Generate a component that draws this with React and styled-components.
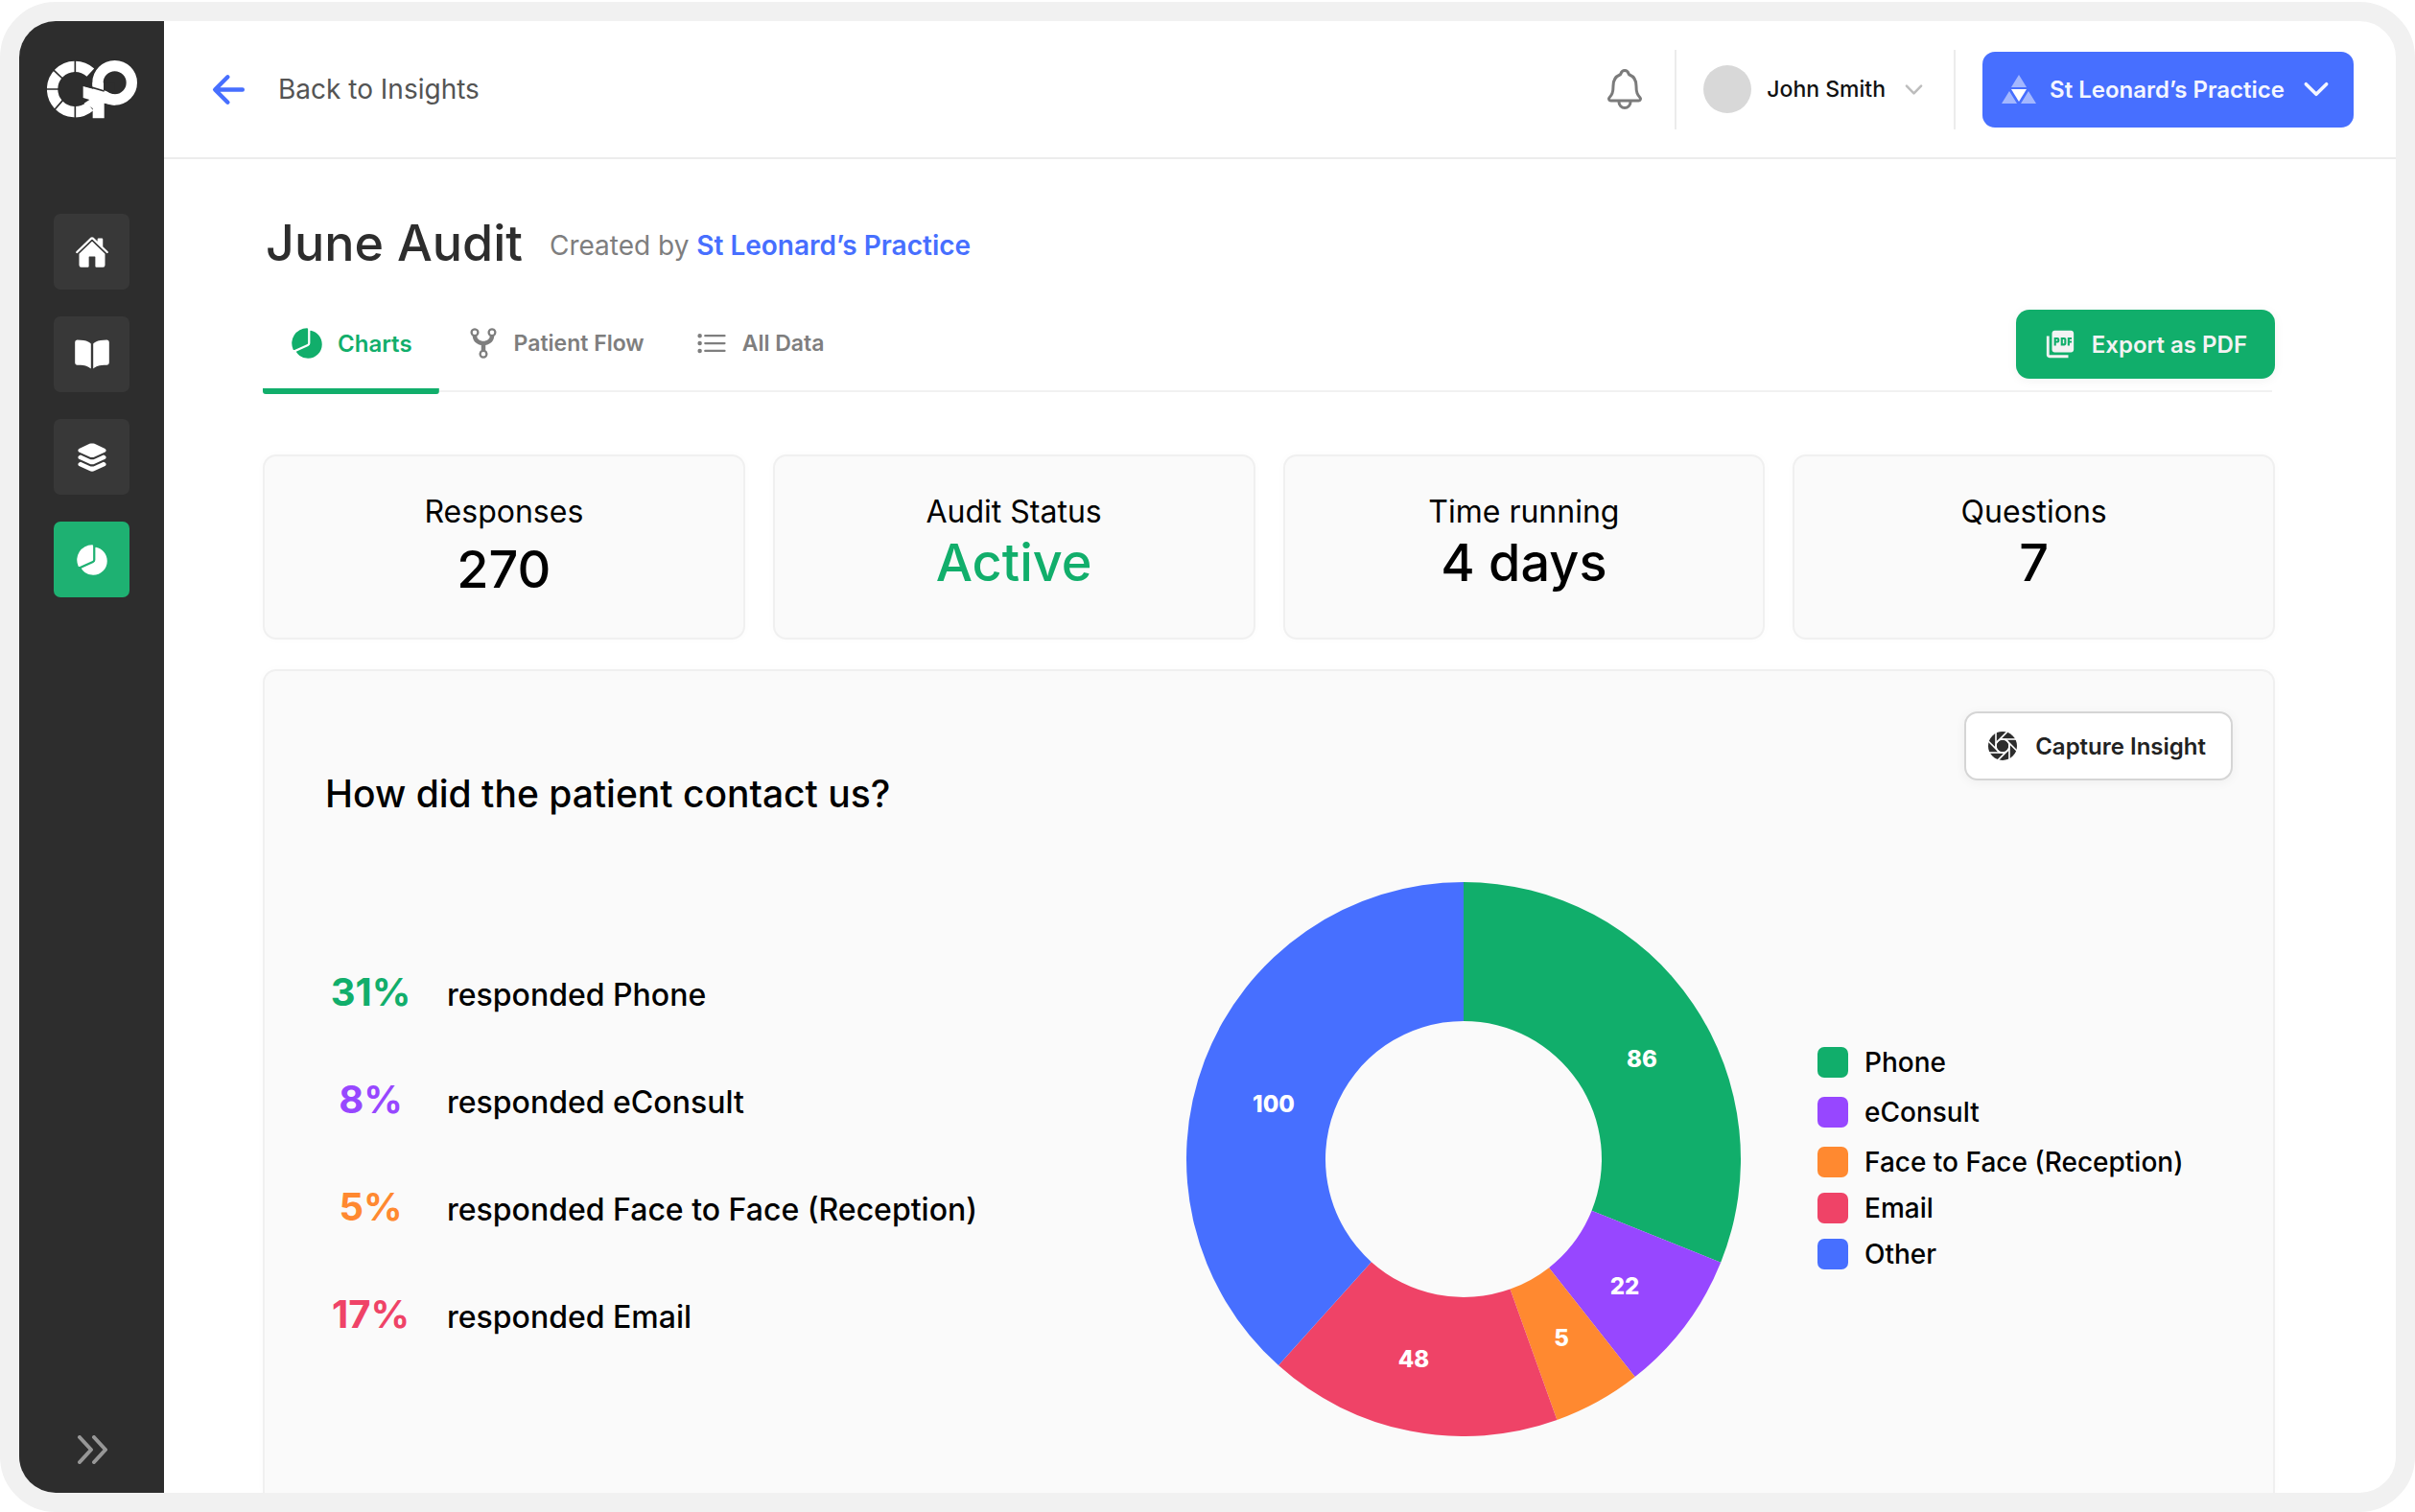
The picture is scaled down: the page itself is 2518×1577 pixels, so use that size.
import React from 'react';
import styled, { createGlobalStyle } from 'styled-components';
import {
  IoArrowBack,
  IoBook,
  IoChevronDown,
  IoGitNetwork,
  IoHome,
  IoLayers,
  IoListOutline,
  IoNotificationsOutline,
  IoPieChart,
} from 'react-icons/io5';
import { MdPictureAsPdf } from 'react-icons/md';

const colors = {
  green: '#11ae6b',
  purple: '#9747ff',
  orange: '#ff8930',
  red: '#ef4367',
  blue: '#476fff',
  dark: '#2d2d2d',
  grey: '#7e7e7e',
  line: '#ececec',
};

const GlobalStyle = createGlobalStyle`
  * {
    box-sizing: border-box;
  }

  body {
    margin: 0;
    background: #fff;
    color: #000;
    font-family: Inter, 'Liberation Sans', sans-serif;
  }

  h1, h2, p, ul, dl, dd {
    margin: 0;
    padding: 0;
  }

  button {
    font-family: inherit;
    cursor: pointer;
  }

  svg {
    display: block;
    flex-shrink: 0;
  }
`;

const Frame = styled.div`
  height: 100vh;
  padding-top: 2px;
`;

const Shell = styled.div`
  display: flex;
  height: 100%;
  border: 20px solid #f1f1f1;
  border-radius: 58px;
  background: #fff;
  overflow: hidden;
`;

const Sidebar = styled.aside`
  display: flex;
  flex-direction: column;
  align-items: center;
  flex: 0 0 151px;
  padding: 41px 0 30px;
  background: ${colors.dark};
`;

const Nav = styled.nav`
  display: flex;
  flex-direction: column;
  gap: 28px;
  margin-top: 99px;
`;

const NavLink = styled.a`
  display: flex;
  align-items: center;
  justify-content: center;
  width: 79px;
  height: 79px;
  border-radius: 7px;
  background: ${({ $active }) => ($active ? '#1eb172' : '#383838')};
  color: #fff;
`;

const CollapseButton = styled.button`
  margin-top: auto;
  padding: 0;
  border: 0;
  background: none;
`;

const Main = styled.div`
  display: flex;
  flex-direction: column;
  flex: 1;
  min-width: 0;
`;

const TopBar = styled.header`
  display: flex;
  align-items: center;
  flex: 0 0 144px;
  padding: 0 44px;
  border-bottom: 2px solid ${colors.line};
`;

const BackLink = styled.a`
  display: flex;
  align-items: center;
  gap: 28px;
  margin-right: auto;
  color: #545454;
  font-size: 28px;
  text-decoration: none;

  svg {
    color: ${colors.blue};
  }
`;

const BellButton = styled.button`
  padding: 0;
  margin-right: 28px;
  border: 0;
  background: none;
  color: #7b7b7b;
`;

const UserButton = styled.button`
  display: flex;
  align-items: center;
  height: 83px;
  padding: 0 28px;
  border: solid ${colors.line};
  border-width: 0 2px;
  background: none;
  color: #111;
  font-size: 23px;
  font-weight: 500;

  svg {
    margin-left: 16px;
    color: #bdbdbd;
  }
`;

const Avatar = styled.span`
  width: 50px;
  height: 50px;
  margin-right: 16px;
  border-radius: 50%;
  background: #d8d8d8;
`;

const PracticeButton = styled.button`
  display: flex;
  align-items: center;
  gap: 14px;
  height: 79px;
  margin-left: 28px;
  padding: 0 20px;
  border: 0;
  border-radius: 13px;
  background: ${colors.blue};
  color: #f4f6ff;
  font-size: 24px;
  font-weight: 600;
`;

const Content = styled.main`
  display: flex;
  flex-direction: column;
  flex: 1;
  min-height: 0;
  padding: 56px 126px 0 103px;
`;

const TitleRow = styled.div`
  display: flex;
  align-items: center;
  gap: 28px;
  padding-left: 3px;
`;

const Title = styled.h1`
  color: ${colors.dark};
  font-size: 52px;
  font-weight: 500;
  line-height: 64px;
`;

const CreatedBy = styled.p`
  padding-top: 4px;
  color: ${colors.grey};
  font-size: 28px;

  a {
    color: ${colors.blue};
    font-weight: 600;
    text-decoration: none;
  }
`;

const TabBar = styled.div`
  display: flex;
  align-items: flex-start;
  height: 94px;
  margin-top: 31px;
  background: linear-gradient(#f1f1f1, #f1f1f1) left bottom 2px / calc(100% - 3px) 2px no-repeat;
`;

const Tab = styled.button`
  display: flex;
  align-items: center;
  gap: 14px;
  height: 94px;
  padding: 0 24px 12px 28px;
  border: 0;
  background: none;
  color: ${colors.grey};
  font-size: 23px;
  font-weight: 600;

  &[aria-selected='true'] {
    padding-right: 28px;
    background: linear-gradient(${colors.green}, ${colors.green}) bottom / 100% 6px no-repeat;
    border-radius: 3px;
    color: ${colors.green};
    font-size: 24px;
  }
`;

const ExportButton = styled.button`
  display: flex;
  align-items: center;
  gap: 16px;
  height: 72px;
  margin: 6px 0 0 auto;
  padding: 0 29px;
  border: 0;
  border-radius: 14px;
  background: ${colors.green};
  box-shadow: 0 2px 12px rgba(0, 0, 0, 0.05);
  color: #f3f3f3;
  font-size: 24px;
  font-weight: 600;
`;

const Stats = styled.dl`
  display: grid;
  grid-template-columns: repeat(4, 1fr);
  gap: 29px;
  margin-top: 63px;
`;

const StatCard = styled.div`
  height: 193px;
  padding-top: 38px;
  border: 2px solid #f0f0f0;
  border-radius: 14px;
  background: #fafafa;
  box-shadow: 0 0 10px rgba(0, 0, 0, 0.02);
  text-align: center;
`;

const StatLabel = styled.dt`
  font-size: 32px;
  line-height: 40px;
`;

const StatValue = styled.dd`
  padding-top: ${({ $spaced }) => ($spaced ? '7px' : '0')};
  color: ${({ $color }) => $color || '#000'};
  font-size: 54px;
  font-weight: 500;
  line-height: 66px;
`;

const Panel = styled.section`
  display: flex;
  flex-direction: column;
  flex: 1;
  margin-top: 31px;
  padding: 42px 42px 0 63px;
  border: 2px solid #f0f0f0;
  border-bottom: 0;
  border-radius: 14px 14px 0 0;
  background: #fafafa;
  box-shadow: 0 0 10px rgba(0, 0, 0, 0.02);
`;

const CaptureButton = styled.button`
  display: flex;
  align-items: center;
  align-self: flex-end;
  gap: 16px;
  height: 72px;
  padding: 0 26px 0 20px;
  border: 2px solid #d5d5d5;
  border-radius: 14px;
  background: #fff;
  box-shadow: 0 2px 12px rgba(0, 0, 0, 0.05);
  color: #222;
  font-size: 24px;
  font-weight: 600;
`;

const Question = styled.h2`
  margin-top: -10px;
  font-size: 39px;
  font-weight: 500;
  line-height: 48px;
`;

const Results = styled.div`
  display: flex;
  align-items: flex-start;
  margin-top: 68px;
`;

const AnswerList = styled.ul`
  flex: 1;
  padding-top: 87px;
  list-style: none;
`;

const Answer = styled.li`
  display: flex;
  align-items: baseline;
  gap: 32px;
  height: 112px;
  font-size: 32px;
  font-weight: 500;
  line-height: 56px;
`;

const Percent = styled.span`
  width: 95px;
  color: ${({ $color }) => $color};
  font-size: 40px;
  font-weight: 700;
  text-align: center;
`;

const ChartLabel = styled.text`
  fill: #fff;
  font-size: 24px;
  font-weight: 800;
  text-anchor: middle;
`;

const Legend = styled.ul`
  width: 433px;
  margin-left: 80px;
  padding-top: 172px;
  list-style: none;
`;

const LegendItem = styled.li`
  display: flex;
  align-items: center;
  gap: 17px;
  margin-bottom: ${({ $tight }) => ($tight ? '16px' : '20px')};
  font-size: 28px;
  font-weight: 500;
  line-height: 32px;

  &::before {
    content: '';
    width: 32px;
    height: 32px;
    border-radius: 7px;
    background: ${({ $color }) => $color};
  }
`;

const stats = [
  { label: 'Responses', value: '270', spaced: true },
  { label: 'Audit Status', value: 'Active', color: colors.green },
  { label: 'Time running', value: '4 days' },
  { label: 'Questions', value: '7' },
];

const answers = [
  { percent: '31%', text: 'responded Phone', color: colors.green },
  { percent: '8%', text: 'responded eConsult', color: colors.purple },
  { percent: '5%', text: 'responded Face to Face (Reception)', color: colors.orange },
  { percent: '17%', text: 'responded Email', color: colors.red },
];

// start / end are degrees clockwise from the top of the ring
const slices = [
  { name: 'Phone', count: 86, color: colors.green, start: 0, end: 111.9, x: 475, y: 193 },
  { name: 'eConsult', count: 22, color: colors.purple, start: 111.9, end: 141.8, x: 457, y: 430 },
  { name: 'Face to Face (Reception)', count: 5, color: colors.orange, start: 141.8, end: 160.3, x: 391, y: 484, tight: true },
  { name: 'Email', count: 48, color: colors.red, start: 160.3, end: 221.9, x: 237, y: 506, tight: true },
  { name: 'Other', count: 100, color: colors.blue, start: 221.9, end: 360, x: 91, y: 240, tight: true },
];

const point = (radius, degrees) => {
  const angle = (degrees * Math.PI) / 180;
  return `${289 + radius * Math.sin(angle)} ${289 - radius * Math.cos(angle)}`;
};

const slicePath = ({ start, end }) =>
  `M${point(289, start)} A289 289 0 0 1 ${point(289, end)} L${point(144, end)} A144 144 0 0 0 ${point(144, start)} Z`;

const Logo = () => (
  <svg width="94" height="61" viewBox="24 38 282 183" role="img" aria-label="GP">
    <path d="M160 76 A71 71 0 1 0 158 182" fill="none" stroke="#fff" strokeWidth="34" />
    <circle cx="236" cy="108" r="53" fill="none" stroke="#fff" strokeWidth="34" />
    <path d="M200 108 V131 L236 143 V108 Z" fill={colors.dark} />
    <path d="M166 108 H201 V133 L166 121 Z" fill="#fff" />
    <path
      d="M137 119 L236 145 V178 L203 172 V219 H167 V188 L140 172 L157 161 L137 155 Z"
      fill="#fff"
    />
    <path
      d="M112 34 V80 M112 176 V222 M20 128 H66 M40 64 L76 98 M46 194 L76 160 M136 114 L203 134"
      stroke={colors.dark}
      strokeWidth="5"
    />
  </svg>
);

const PracticeLogo = () => (
  <svg width="36" height="30" viewBox="0 0 36 30" aria-hidden="true">
    <path d="M18 0 L26 13 H10 Z M8 17 L16 30 H0 Z M28 17 L36 30 H20 Z" fill="#fff" opacity="0.5" />
    <path d="M10 15 H26 L18 28 Z" fill="#fff" />
  </svg>
);

const DoubleChevron = () => (
  <svg width="32" height="30" viewBox="0 0 32 30" fill="none" stroke="#979797" strokeWidth="4" strokeLinecap="round" strokeLinejoin="round" aria-hidden="true">
    <path d="M3 2 L15 15 L3 28 M18 2 L30 15 L18 28" />
  </svg>
);

const ApertureIcon = () => (
  <svg width="36" height="36" viewBox="-18 -18 36 36" aria-hidden="true">
    <circle r="15" fill={colors.dark} />
    <circle r="7" fill="none" stroke="#fff" strokeWidth="1.5" />
    {[0, 45, 90, 135, 180, 225, 270, 315].map((turn) => (
      <path key={turn} d="M-3 -7 L14 -7" stroke="#fff" strokeWidth="1.6" transform={`rotate(${turn})`} />
    ))}
  </svg>
);

const DonutChart = () => (
  <svg width="578" height="578" viewBox="0 0 578 578" role="img" aria-label="Contact methods">
    {slices.map((slice) => (
      <path key={slice.name} d={slicePath(slice)} fill={slice.color} />
    ))}
    {slices.map((slice) => (
      <ChartLabel key={slice.name} x={slice.x} y={slice.y}>
        {slice.count}
      </ChartLabel>
    ))}
  </svg>
);

const App = () => {
  return (
    <Frame>
      <GlobalStyle />
      <Shell>
        <Sidebar>
          <Logo />
          <Nav aria-label="Main">
            <NavLink href="#home" aria-label="Home"><IoHome size={36} /></NavLink>
            <NavLink href="#library" aria-label="Library"><IoBook size={38} /></NavLink>
            <NavLink href="#layers" aria-label="Layers"><IoLayers size={36} /></NavLink>
            <NavLink href="#insights" aria-label="Insights" $active><IoPieChart size={36} /></NavLink>
          </Nav>
          <CollapseButton type="button" aria-label="Expand menu">
            <DoubleChevron />
          </CollapseButton>
        </Sidebar>

        <Main>
          <TopBar>
            <BackLink href="#insights">
              <IoArrowBack size={47} />
              Back to Insights
            </BackLink>
            <BellButton type="button" aria-label="Notifications">
              <IoNotificationsOutline size={48} />
            </BellButton>
            <UserButton type="button">
              <Avatar />
              John Smith
              <IoChevronDown size={27} />
            </UserButton>
            <PracticeButton type="button">
              <PracticeLogo />
              St Leonard’s Practice
              <IoChevronDown size={38} />
            </PracticeButton>
          </TopBar>

          <Content>
            <TitleRow>
              <Title>June Audit</Title>
              <CreatedBy>
                Created by <a href="#practice">St Leonard’s Practice</a>
              </CreatedBy>
            </TitleRow>

            <TabBar role="tablist">
              <Tab type="button" role="tab" aria-selected="true"><IoPieChart size={36} />Charts</Tab>
              <Tab type="button" role="tab" aria-selected="false"><IoGitNetwork size={36} />Patient Flow</Tab>
              <Tab type="button" role="tab" aria-selected="false"><IoListOutline size={36} />All Data</Tab>
              <ExportButton type="button"><MdPictureAsPdf size={34} />Export as PDF</ExportButton>
            </TabBar>

            <Stats>
              {stats.map((stat) => (
                <StatCard key={stat.label}>
                  <StatLabel>{stat.label}</StatLabel>
                  <StatValue $color={stat.color} $spaced={stat.spaced}>{stat.value}</StatValue>
                </StatCard>
              ))}
            </Stats>

            <Panel>
              <CaptureButton type="button"><ApertureIcon />Capture Insight</CaptureButton>
              <Question>How did the patient contact us?</Question>
              <Results>
                <AnswerList>
                  {answers.map((answer) => (
                    <Answer key={answer.text}>
                      <Percent $color={answer.color}>{answer.percent}</Percent>
                      {answer.text}
                    </Answer>
                  ))}
                </AnswerList>
                <DonutChart />
                <Legend>
                  {slices.map((slice) => (
                    <LegendItem key={slice.name} $color={slice.color} $tight={slice.tight}>
                      {slice.name}
                    </LegendItem>
                  ))}
                </Legend>
              </Results>
            </Panel>
          </Content>
        </Main>
      </Shell>
    </Frame>
  );
};

export default App;
